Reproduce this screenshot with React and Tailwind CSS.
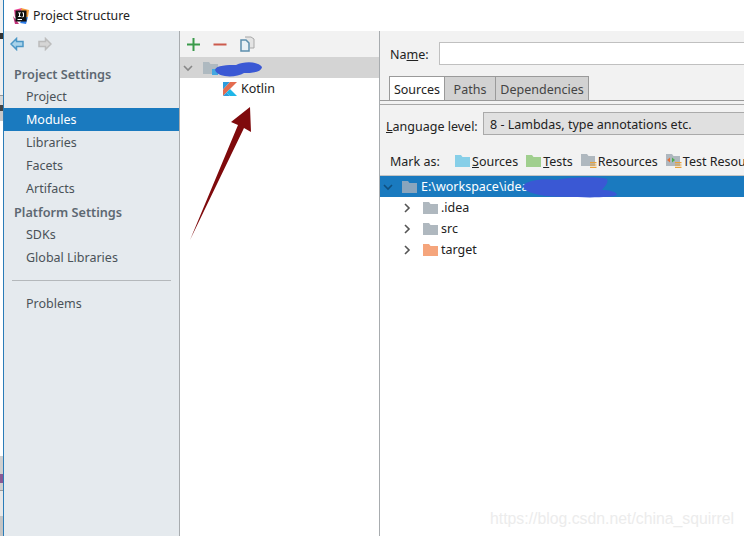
const font = { fontFamily: '"Noto Sans", "Open Sans", sans-serif' };

function Folder({ color, className = "" }) {
  return (
    <svg width="15" height="12" viewBox="0 0 15 12" className={className}>
      <path d="M0 0H6L7.5 2H15V12H0Z" fill={color} />
    </svg>
  );
}

function ResFolder({ extra }) {
  return (
    <svg width="16" height="16" viewBox="0 0 16 16" className="shrink-0">
      <path d="M0 1H6L7.5 3H14V13H0Z" fill="#afb8bf" />
      {extra}
      <path d="M9 9H15.5V10.2H9ZM9 11.4H15.5V12.6H9ZM9 13.8H15.5V15H9Z" fill="#e9a23b" />
    </svg>
  );
}

function Chevron({ down, color = "#666" }) {
  return (
    <svg width="12" height="12" viewBox="0 0 12 12" className="shrink-0">
      <path d={down ? "M2 4L6 8L10 4" : "M4 2L8 6L4 10"} fill="none" stroke={color} strokeWidth="1.6" />
    </svg>
  );
}

function NavItem({ label, active }) {
  return (
    <div className={`h-[23px] pt-[2px] flex items-center pl-[22px] text-[12.5px] ${active ? "bg-[#1a7abf] text-white" : "text-[#4a5258]"}`}>
      {label}
    </div>
  );
}

function TreeRow({ label, color }) {
  return (
    <div className="h-[21px] flex items-center pl-[21px]">
      <Chevron color="#555" />
      <Folder color={color} className="ml-[10px]" />
      <span className="ml-[3px] pt-[2px] text-[12.5px] text-[#222]">{label}</span>
    </div>
  );
}

function Tab({ label, active }) {
  return (
    <div className={`h-[24px] pt-[4px] flex items-center justify-center border-r border-t border-[#9a9a9a] text-[12.5px] ${active ? "w-[56px] bg-white border-l text-[#222]" : "bg-[#d2d2d2] text-[#444]"}`} style={active ? undefined : { width: label === "Paths" ? 51 : 93 }}>
      {label}
    </div>
  );
}

export default function App() {
  return (
    <div className="relative w-[744px] h-[536px] overflow-hidden flex bg-white" style={font}>
      <div className="w-[3px] shrink-0 flex flex-col bg-[#f0f0f0]">
        <div className="h-[33px]" />
        <div className="h-[6px] bg-[#333333]" />
        <div className="h-[56px]" />
        <div className="h-px bg-[#999999]" />
        <div className="h-[9px] bg-[#d8d8d8]" />
        <div className="h-[6px] bg-[#444444]" />
        <div className="h-[10px] bg-[#c8c8c8]" />
        <div className="h-[335px] bg-white" />
        <div className="h-[18px] bg-[#cfcfcf]" />
        <div className="h-[9px] bg-[#8a5a94]" />
        <div className="h-[7px] bg-[#cfcfcf]" />
        <div className="h-px bg-[#999999]" />
        <div className="h-[25px] bg-[#e8e8e8]" />
        <div className="h-[20px] bg-[#c4c4c4]" />
      </div>
      <div className="flex-1 min-w-0 border-l border-[#2a7cb8] flex flex-col">
        {/* Title bar */}
        <div className="h-[31px] shrink-0 flex items-center pl-[9px] bg-white">
          <svg width="16" height="16" viewBox="0 0 16 16" className="shrink-0">
            <path d="M1 2L9 0L8 8L2 9Z" fill="#e84393" />
            <path d="M8 0L16 2L15 9L9 8Z" fill="#f39c3d" />
            <path d="M0 8L6 16H2Z" fill="#c0327a" />
            <path d="M10 10L15 9L13 16L7 15Z" fill="#2f80ed" />
            <rect x="2.5" y="2.5" width="11" height="11" fill="#111" />
            <path d="M4.5 11H9V12H4.5Z" fill="#fff" />
            <path d="M5 4.5H8V5.3H7V8.3H8V9H5V8.3H6V5.3H5ZM9 4.5H11V8.5L10 9.3H8.6V8.5H10V5.3H9Z" fill="#fff" />
          </svg>
          <span className="ml-[4px] pt-[2px] text-[12.3px] text-[#222]">Project Structure</span>
        </div>

        <div className="flex-1 min-h-0 flex">
          {/* Sidebar */}
          <div className="w-[176px] shrink-0 bg-[#e5eaee] border-r border-[#a8acaf] flex flex-col">
            <div className="h-[26px] flex items-center pl-[6px] gap-[14px]">
              <svg width="14" height="14" viewBox="0 0 14 14">
                <path d="M6.5 1.5L1 7L6.5 12.5V9.5H13V4.5H6.5Z" fill="#a9d3ea" stroke="#4b97c6" strokeWidth="1.5" />
              </svg>
              <svg width="14" height="14" viewBox="0 0 14 14">
                <path d="M7.5 1.5L13 7L7.5 12.5V9.5H1V4.5H7.5Z" fill="#d6d6d6" stroke="#bcbcbc" strokeWidth="1.5" />
              </svg>
            </div>
            <div className="h-[22px] mt-[6px] pt-[2px] flex items-center pl-[10px] text-[12.7px] font-semibold text-[#5d6872]">Project Settings</div>
            <NavItem label="Project" />
            <NavItem label="Modules" active />
            <NavItem label="Libraries" />
            <NavItem label="Facets" />
            <NavItem label="Artifacts" />
            <div className="h-[23px] pt-[3px] flex items-center pl-[10px] text-[12.7px] font-semibold text-[#5d6872]">Platform Settings</div>
            <NavItem label="SDKs" />
            <NavItem label="Global Libraries" />
            <div className="h-[1px] mx-[8px] my-[11px] bg-[#b4b8bb]" />
            <NavItem label="Problems" />
          </div>

          {/* Middle */}
          <div className="w-[200px] shrink-0 bg-white border-r border-[#a8acaf] flex flex-col">
            <div className="h-[26px] bg-[#f2f2f2] flex items-center pl-[7px] gap-[13px]">
              <svg width="13" height="13" viewBox="0 0 13 13">
                <path d="M5.5 0H7.5V5.5H13V7.5H7.5V13H5.5V7.5H0V5.5H5.5Z" fill="#3a9a4a" />
              </svg>
              <svg width="14" height="13" viewBox="0 0 14 13">
                <rect x="0.5" y="5.5" width="13" height="2" fill="#cc5a4c" />
              </svg>
              <svg width="15" height="16" viewBox="0 0 15 16">
                <path d="M5 1H11L14 3V12H10" fill="#e4e4e4" stroke="#a8a8a8" />
                <path d="M1 4H6L9 7V15H1Z" fill="#e8f0f5" stroke="#5d8fad" strokeWidth="1.5" />
              </svg>
            </div>
            <div className="h-[21px] bg-[#d4d4d4] flex items-center pl-[2px]">
              <Chevron down color="#888" />
              <div className="relative ml-[9px]">
                <Folder color="#aeb9c0" />
                <div className="absolute left-[9px] top-[7px] w-[6px] h-[6px] bg-[#45a8e0]" />
              </div>
            </div>
            <div className="h-[21px] flex items-center pl-[43px]">
              <svg width="14" height="14" viewBox="0 0 14 14" className="shrink-0">
                <path d="M0 0H7L0 7.5Z" fill="#2d9bdc" />
                <path d="M7 0H14L0 14V7.5Z" fill="#e36b4f" />
                <path d="M3.5 10.5L7 7L14 14H7Z" fill="#1fb6e8" />
                <path d="M0 14L3.5 10.5L7 14Z" fill="#2d9bdc" />
              </svg>
              <span className="ml-[4px] pt-[2px] text-[12.5px] text-[#222]">Kotlin</span>
            </div>
          </div>

          {/* Right */}
          <div className="flex-1 min-w-0 flex flex-col bg-white">
            <div className="bg-[#f2f2f2] h-[145px] shrink-0 flex flex-col border-b border-[#c4c4c4]">
              <div className="flex items-center h-[23px] mt-[11px] pl-[10px]">
                <span className="w-[49px] pt-[3px] text-[12.5px] text-[#222]">Na<span className="underline">m</span>e:</span>
                <div className="flex-1 h-full bg-white border border-r-0 border-[#c0c0c0]" />
              </div>
              <div className="flex items-end h-[25px] mt-[11px] pl-[9px] border-b border-[#9a9a9a]">
                <Tab label="Sources" active />
                <Tab label="Paths" />
                <Tab label="Dependencies" />
              </div>
              <div className="h-[3px]" />
              <div className="h-px bg-[#a8a8a8]" />
              <div className="flex items-center h-[23px] mt-[7px] pl-[6px]">
                <span className="w-[97px] pt-[7px] text-[12.5px] text-[#222]"><span className="underline">L</span>anguage level:</span>
                <div className="flex-1 h-full pt-[3px] flex items-center pl-[6px] bg-[#e0e0e0] border border-r-0 border-[#aaaaaa] text-[12.5px] text-[#222]">8 - Lambdas, type annotations etc.</div>
              </div>
              <div className="flex items-center h-[20px] mt-[16px] pl-[10px] text-[12.5px] text-[#222] whitespace-nowrap overflow-hidden">
                <span className="w-[65px] shrink-0 pt-[3px]">Mark as:</span>
                <Folder color="#87cfe8" className="shrink-0" />
                <span className="ml-[2px] mr-[8px] pt-[3px]"><span className="underline">S</span>ources</span>
                <Folder color="#a0cf8e" className="shrink-0" />
                <span className="ml-[2px] mr-[8px] pt-[3px]"><span className="underline">T</span>ests</span>
                <ResFolder />
                <span className="ml-px mr-[8px] pt-[3px]">Resources</span>
                <ResFolder extra={<><path d="M1 7L4 4.5V9.5Z" fill="#e2703a" /><path d="M9 7L6 4.5V9.5Z" fill="#4caf50" /></>} />
                <span className="ml-px pt-[3px]">Test Resources</span>
              </div>
            </div>
            <div className="h-[21px] bg-[#1a7abf] flex items-center pl-[2px]">
              <Chevron down color="#0f4f7f" />
              <Folder color="#8aa5bd" className="ml-[8px]" />
              <span className="ml-[4px] pt-[2px] text-[12.5px] text-white whitespace-nowrap">E:\workspace\idea</span>
            </div>
            <TreeRow label=".idea" color="#afb8bf" />
            <TreeRow label="src" color="#afb8bf" />
            <TreeRow label="target" color="#f5a57c" />
          </div>
        </div>
      </div>

      {/* Redaction scribbles and annotation arrow */}
      <svg className="absolute left-0 top-0 pointer-events-none" width="744" height="536" viewBox="0 0 744 536">
        <path d="M215 70C216 65 228 65 236 65C244 61 258 61 262 67C261 73 250 73 244 73C236 78 218 78 215 70Z" fill="#3a58d4" />
        <path d="M523 186C526 180 545 178 556 180C565 177 600 176 607 179C609 183 604 187 602 190C610 190 617 192 617 195C610 199 565 197 545 196C535 194 524 192 523 186Z" fill="#3a58d4" />
        <path d="M190 240L238 125L231 122L250 107L251 132L244 128Z" fill="#7f0a0c" />
      </svg>

      {/* Watermark */}
      <div className="absolute left-[490px] top-[507px] text-[15.8px] text-[#ececec] whitespace-nowrap" style={{ fontFamily: '"Liberation Sans", sans-serif' }}>
        https://blog.csdn.net/china_squirrel
      </div>
    </div>
  );
}
